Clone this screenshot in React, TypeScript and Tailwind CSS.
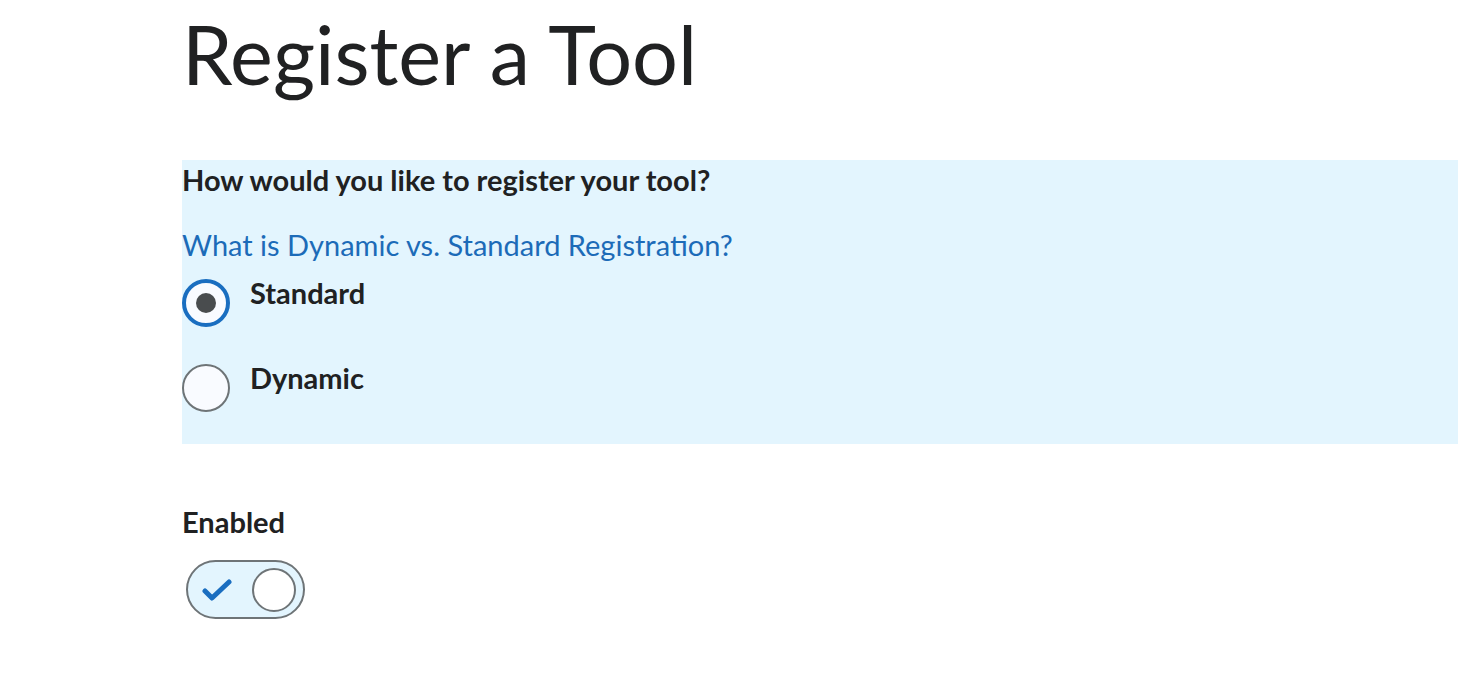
import React from "react";

const RadioRow = ({ label, checked }: { label: string; checked: boolean }) => (
  <label className="flex items-start gap-[20px]">
    {checked ? (
      <span className="w-[48px] h-[48px] rounded-full border-[4px] border-[#1a6ec0] bg-[#f9fbff] flex items-center justify-center shrink-0">
        <span className="w-[20px] h-[20px] rounded-full bg-[#494c4e]"></span>
      </span>
    ) : (
      <span className="w-[48px] h-[48px] rounded-full border-[2px] border-[#6e7477] bg-[#f9fbff] shrink-0"></span>
    )}
    <span className="text-[29px] font-bold text-[#202122] leading-[28px]">{label}</span>
  </label>
);

export default function App() {
  return (
    <div className="min-h-screen bg-white" style={{ fontFamily: "Lato, 'Noto Sans', sans-serif" }}>
      <div className="pl-[182px]">
        <h1 className="text-[81px] font-normal text-[#202122] leading-none pt-[13px]">Register a Tool</h1>

        <section className="mt-[66px] bg-[#e3f5fe] pt-[2px] pb-[32px]">
          <div className="text-[29px] font-bold text-[#202122] leading-[36px]">
            How would you like to register your tool?
          </div>
          <a className="block mt-[29px] text-[29px] text-[#1c6bb8] leading-[36px]">
            What is Dynamic vs. Standard Registration?
          </a>
          <div className="mt-[16px] flex flex-col gap-[37px]">
            <RadioRow label="Standard" checked />
            <RadioRow label="Dynamic" checked={false} />
          </div>
        </section>

        <div className="mt-[60px]">
          <div className="text-[29px] font-bold text-[#202122] leading-[36px]">Enabled</div>
          <div className="mt-[20px] ml-[4px] w-[119px] h-[59px] rounded-full border-[2px] border-[#6e7477] bg-[#e3f5fe] flex items-center justify-between pl-[14px] pr-[7px]">
            <svg width="30" height="22" viewBox="0 0 30 22" fill="none">
              <path d="M3 12 L10 19 L27 3" stroke="#1a6ec0" strokeWidth="5" strokeLinecap="round" strokeLinejoin="round" />
            </svg>
            <span className="w-[44px] h-[44px] rounded-full border-[2px] border-[#6e7477] bg-white"></span>
          </div>
        </div>
      </div>
    </div>
  );
}
